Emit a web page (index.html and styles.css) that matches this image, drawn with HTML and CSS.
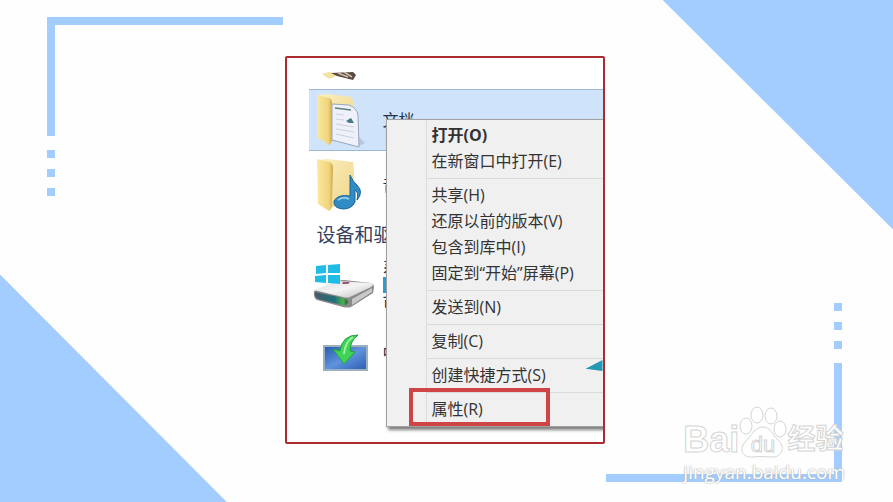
FILE: index.html
```html
<!DOCTYPE html>
<html lang="zh-CN">
<head>
    <meta charset="UTF-8">
    <meta name="viewport" content="width=device-width, initial-scale=1.0">
    <title>文档属性</title>
    <link rel="stylesheet" href="styles.css">
</head>
<body>
    <main class="slide">
        <div class="triangle triangle-top"></div>
        <div class="triangle triangle-bottom"></div>

        <div class="bracket bracket-top">
            <div class="angle"></div>
            <div class="dot"></div>
            <div class="dot"></div>
            <div class="dot"></div>
        </div>
        <div class="bracket bracket-bottom">
            <div class="dot"></div>
            <div class="dot"></div>
            <div class="dot"></div>
            <div class="angle"></div>
        </div>

        <section class="panel">
            <div class="files">
                <svg class="cropped" viewBox="0 0 74 12" aria-hidden="true">
                    <path d="M13 2 L20 0 L29 2 L25 5 L20 7 Z" fill="#f3e3a0"/>
                    <path d="M22 1 L44 0 L47 3 L44 8 L36 6 L28 4 Z" fill="#5b4a42"/>
                    <path d="M29 1 L39 5 M35 0 L43 5" stroke="#cdbfae" stroke-width="1.5"/>
                </svg>

                <div class="row selected">
                    <svg class="icon" viewBox="0 0 74 58" aria-hidden="true">
                        <defs>
                            <linearGradient id="front" x1="0" y1="0" x2="1" y2="0">
                                <stop offset="0" stop-color="#fbe8a0"/>
                                <stop offset="0.75" stop-color="#f0d47c"/>
                                <stop offset="1" stop-color="#cfa94e"/>
                            </linearGradient>
                            <linearGradient id="back" x1="0" y1="0" x2="1" y2="1">
                                <stop offset="0" stop-color="#fbf0bf"/>
                                <stop offset="1" stop-color="#efd488"/>
                            </linearGradient>
                        </defs>
                        <path d="M50 55 L56 52 L50 46 Z" fill="#b4c8df"/>
                        <path d="M9 4 L18 3 L43 6 L45 15 L43 46 L21 50 Z" fill="url(#back)"/>
                        <path d="M23 13 L40 14 Q48 17 49 24 L50 56 L23 49 Z" fill="#eef0fa" stroke="#9aa6b8"/>
                        <path d="M26 17 L42 19" stroke="#5f7f7c" stroke-width="1.5"/>
                        <path d="M27 23 L35 24 M27 28 L35 29 M27 33 L45 36 M27 38 L45 41 M27 43 L45 47" stroke="#cfd0df"/>
                        <path d="M37 30 L42 27 L45 32 L40 32 Z" fill="#477a86"/>
                        <path d="M8 4 L20 7 Q23 8 23 11 L23 48 Q23 52 20 54 L8 46 Z" fill="url(#front)"/>
                    </svg>
                    <span class="name">文档</span>
                </div>

                <div class="row music">
                    <svg class="icon" viewBox="0 0 74 58" aria-hidden="true">
                        <path d="M9 4 L18 3 L44 6 L45 16 L44 44 L21 52 Z" fill="url(#back)"/>
                        <path d="M8 3 L20 6 Q24 7 24 11 L23 49 Q23 53 20 55 L9 48 Z" fill="url(#front)"/>
                        <path d="M41 19 Q44 26 48 29 Q55 36 48 44 Q50 36 46 34 L46 46 Q43 53 34 53 Q24 52 25 45 Q29 38 41 40 Z" fill="#318bc4" stroke="#1b6599"/>
                        <path d="M29 44 Q34 40 40 43" stroke="#8ccbed" stroke-width="2" fill="none"/>
                    </svg>
                    <span class="name">音</span>
                </div>

                <h2 class="group">设备和驱</h2>

                <div class="row drive">
                    <svg class="icon" viewBox="0 0 74 58" aria-hidden="true">
                        <defs>
                            <linearGradient id="metal" x1="0" y1="0" x2="1" y2="1">
                                <stop offset="0" stop-color="#dfdfdf"/>
                                <stop offset="0.5" stop-color="#f4f4f4"/>
                                <stop offset="1" stop-color="#bdbdbd"/>
                            </linearGradient>
                            <linearGradient id="face" x1="0" y1="0" x2="1" y2="0">
                                <stop offset="0" stop-color="#4a5a67"/>
                                <stop offset="0.6" stop-color="#1f6f7d"/>
                                <stop offset="0.85" stop-color="#4db04c"/>
                                <stop offset="1" stop-color="#27613b"/>
                            </linearGradient>
                        </defs>
                        <path d="M5 35 L27 26 Q30 24 35 24 L62 27 Q65 28 65 31 L64 37 L42 51 Q38 52 34 51 L8 44 Q4 42 5 35 Z" fill="#8a8a8a"/>
                        <path d="M5 34 L28 25 L62 27 Q66 28 62 31 L41 41 Q38 42 34 41 Z" fill="url(#metal)"/>
                        <path d="M43 43 L63 32 L63 36 L43 49 Z" fill="#c7c7c7"/>
                        <path d="M6 36 L34 42 Q39 43 39 46 Q38 50 33 49 L9 43 Q5 41 6 36 Z" fill="url(#face)"/>
                        <path d="M34 26 L41 26 L39 28 L33 28 Z" fill="#a25470"/>
                        <path d="M7 10 L17 9 L17 17 L7 18 Z M19 9 L31 8 L31 17 L19 17 Z M6 20 L17 19 L17 27 L6 26 Z M19 19 L31 19 L31 28 L19 27 Z" fill="#20bce6"/>
                    </svg>
                    <div class="usage">
                        <span class="name">系</span>
                        <span class="bar"></span>
                        <span class="name">可</span>
                    </div>
                </div>

                <div class="row download">
                    <svg class="icon" viewBox="0 0 74 58" aria-hidden="true">
                        <defs>
                            <linearGradient id="screen" x1="0" y1="0" x2="1" y2="1">
                                <stop offset="0" stop-color="#2559ad"/>
                                <stop offset="0.5" stop-color="#5f93dc"/>
                                <stop offset="1" stop-color="#2b5bb0"/>
                            </linearGradient>
                        </defs>
                        <rect x="15" y="22" width="43" height="24" fill="url(#screen)" stroke="#9db0bd" stroke-width="2"/>
                        <path d="M49 11 Q33 11 31 27 L24 25 L35 40 L46 28 L41 27 Q41 17 49 11 Z" fill="#3fd455" stroke="#23a33d"/>
                        <path d="M44 13 Q36 18 35 30" stroke="#a5f2a4" stroke-width="2" fill="none"/>
                    </svg>
                    <span class="name">中</span>
                </div>
            </div>

            <ul class="menu">
                <li><button type="button" class="default">打开(O)</button></li>
                <li><button type="button">在新窗口中打开(E)</button></li>
                <li class="separator"></li>
                <li><button type="button">共享(H)</button></li>
                <li><button type="button">还原以前的版本(V)</button></li>
                <li><button type="button">包含到库中(I)</button></li>
                <li><button type="button">固定到“开始”屏幕(P)</button></li>
                <li class="separator"></li>
                <li><button type="button">发送到(N)</button></li>
                <li class="separator"></li>
                <li><button type="button">复制(C)</button></li>
                <li class="separator"></li>
                <li><button type="button">创建快捷方式(S)</button></li>
                <li class="separator"></li>
                <li class="marked"><button type="button">属性(R)</button></li>
            </ul>
            <div class="pointer"></div>
        </section>

        <div class="watermark">
            <div class="brand">
                <span class="bai">Bai</span>
                <svg class="paw" viewBox="0 0 48 52" aria-hidden="true">
                    <ellipse cx="7" cy="20" rx="6" ry="8"/>
                    <ellipse cx="18" cy="9" rx="6" ry="8"/>
                    <ellipse cx="32" cy="10" rx="6" ry="8"/>
                    <ellipse cx="41" cy="23" rx="6" ry="8"/>
                    <path d="M24 21 C32 21 33 29 39 34 C47 41 43 51 34 51 C28 51 20 50 14 51 C3 52 0 43 6 36 C13 30 15 21 24 21 Z"/>
                    <text x="24" y="46" text-anchor="middle">du</text>
                </svg>
                <span class="jingyan">经验</span>
            </div>
            <div class="site">jingyan.baidu.com</div>
        </div>
    </main>
</body>
</html>
```
FILE: styles.css
```css
*, *::after {
    box-sizing: border-box;
}
body {
    margin: 0;
    font-family: "Open Sans", "Noto Sans CJK SC", sans-serif;
    font-size: 16px;
    color: #333;
    background-color: #fefefe;
}
.slide {
    position: relative;
    display: flex;
    align-items: center;
    justify-content: center;
    min-height: 100vh;
    padding: 0 4px 2px 0;
    overflow: hidden;
}

/* Corner decoration */
.triangle {
    position: absolute;
    background-color: #a3cdff;
}
.triangle-top {
    top: 0;
    right: 0;
    width: 25.8%;
    height: 45.7%;
    clip-path: polygon(0 0, 100% 0, 100% 100%);
}
.triangle-bottom {
    bottom: 0;
    left: 0;
    width: 25.4%;
    height: 45.3%;
    clip-path: polygon(0 0, 100% 100%, 0 100%);
}
.bracket {
    position: absolute;
    display: flex;
    flex-direction: column;
    gap: 11px;
    width: 236px;
}
.bracket-top {
    top: 17px;
    left: 47px;
}
.bracket-bottom {
    right: 51px;
    bottom: 20px;
    align-items: flex-end;
}
.angle {
    width: 100%;
    height: 119px;
    border: 0 solid #a3cdff;
}
.bracket-top .angle {
    border-width: 8px 0 0 8px;
    margin-bottom: 3px;
}
.bracket-bottom .angle {
    border-width: 0 8px 8px 0;
    margin-top: 3px;
}
.dot {
    width: 8px;
    height: 8px;
    background-color: #a3cdff;
}

/* Explorer window */
.panel {
    position: relative;
    width: 35.8%;
    min-width: 320px;
    border: 2px solid #ac2b30;
    border-radius: 2px;
    background-color: #fff;
    overflow: hidden;
}
.files {
    padding: 14px 0 55px 22px;
}
.cropped {
    display: block;
    width: 74px;
    height: 12px;
    margin-bottom: 5px;
}
.row {
    display: flex;
    align-items: center;
    height: 68px;
}
.row.selected {
    height: 62px;
    border: 1px solid #9db8cf;
    border-width: 1px 0;
    background-color: #cfe4fa;
}
.icon {
    flex: none;
    width: 74px;
    height: 58px;
}
.name {
    line-height: 20px;
    color: #24354a;
}
.group {
    margin: 0;
    padding-left: 8px;
    font-size: 19px;
    font-weight: normal;
    line-height: 32px;
    color: #35405c;
}
.usage {
    display: flex;
    flex-direction: column;
}
.bar {
    width: 100%;
    height: 16px;
    background-color: #2c9fd0;
}

/* Context menu */
.menu {
    position: absolute;
    top: 61px;
    left: 99px;
    right: -2px;
    margin: 0;
    padding: 2px 0 4px;
    list-style: none;
    border: 1px solid #a0a0a0;
    background: linear-gradient(#dcdcdc, #dcdcdc) 39px 0 / 1px 100% no-repeat #f0f0f0;
    box-shadow: 2px 3px 3px rgba(0,0,0,0.5);
}
.menu li {
    position: relative;
}
.menu button {
    display: block;
    width: 100%;
    height: 26px;
    padding: 0 0 0 45px;
    border: none;
    background: none;
    font: inherit;
    line-height: 26px;
    text-align: left;
    color: #333;
    cursor: pointer;
}
.menu button.default {
    font-weight: bold;
}
.menu .separator {
    height: 8px;
    margin-left: 40px;
    background: linear-gradient(#dadada, #dadada) 0 4px / 100% 1px no-repeat;
}
.marked::after {
    content: "";
    position: absolute;
    top: -8px;
    bottom: -4px;
    left: 22px;
    width: 141px;
    border: 4px solid #cf4444;
    pointer-events: none;
}
.pointer {
    position: absolute;
    right: 0;
    top: 302px;
    width: 17px;
    height: 11px;
    background-color: #2499b6;
    clip-path: polygon(0 80%, 100% 0, 100% 100%);
}

/* Watermark */
.watermark {
    position: absolute;
    right: 48px;
    bottom: 16px;
    color: #fff;
}
.brand {
    display: flex;
    align-items: flex-end;
    height: 52px;
    font-family: "Liberation Sans", "Noto Sans CJK SC", sans-serif;
    font-weight: bold;
    -webkit-text-stroke: 1px #d4d4d4;
}
.bai {
    font-size: 36px;
    line-height: 36px;
}
.paw {
    flex: none;
    width: 48px;
    height: 52px;
    fill: #fff;
    stroke: #d4d4d4;
}
.paw text {
    font-size: 22px;
    font-weight: normal;
}
.jingyan {
    font-size: 28px;
    line-height: 36px;
}
.site {
    font-size: 19px;
    line-height: 28px;
    text-shadow: 0 0 2px #aaa, 0 0 1px #bbb;
}
```
